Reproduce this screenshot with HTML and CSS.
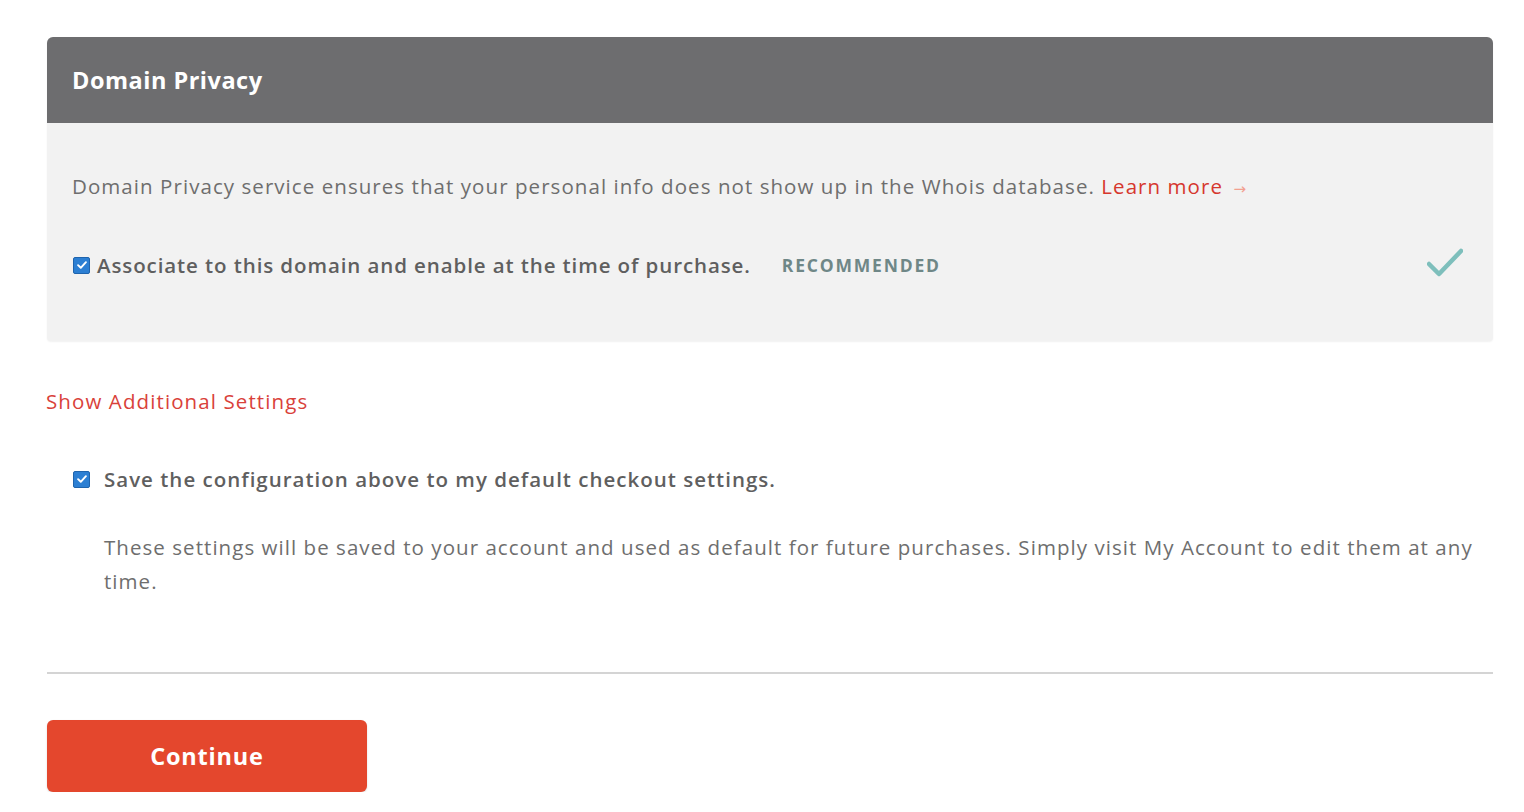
FILE: index.html
```html
<!DOCTYPE html>
<html>
<head>
<meta charset="utf-8">
<link rel="stylesheet" href="styles.css">
</head>
<body>
<div class="page">
  <section class="card">
    <header class="card-head">Domain Privacy</header>
    <div class="card-body">
      <p class="intro">Domain Privacy service ensures that your personal info does not show up in the Whois database. <a class="learn" href="#">Learn more</a> <span class="arrow">&rarr;</span></p>
      <div class="option">
        <label class="opt-label">
          <span class="cbox"><svg viewBox="0 0 16 16" width="16" height="16"><path d="M3.5 8.2 L6.6 11.2 L12.5 4.8" fill="none" stroke="#fff" stroke-width="2.2" stroke-linecap="round" stroke-linejoin="round"/></svg></span>
          <span class="opt-text">Associate to this domain and enable at the time of purchase.</span>
        </label>
        <span class="badge">RECOMMENDED</span>
        <svg class="tick" viewBox="0 0 36 32" width="36" height="32"><path d="M2 17 L12 27 L34 4" fill="none" stroke="#7ebfbc" stroke-width="4.5" stroke-linecap="round" stroke-linejoin="round"/></svg>
      </div>
    </div>
  </section>

  <a class="more" href="#">Show Additional Settings</a>

  <div class="save">
    <label class="save-label">
      <span class="cbox"><svg viewBox="0 0 16 16" width="16" height="16"><path d="M3.5 8.2 L6.6 11.2 L12.5 4.8" fill="none" stroke="#fff" stroke-width="2.2" stroke-linecap="round" stroke-linejoin="round"/></svg></span>
      <span class="save-text">Save the configuration above to my default checkout settings.</span>
    </label>
    <p class="save-desc">These settings will be saved to your account and used as default for future purchases. Simply visit My Account to edit them at any time.</p>
  </div>

  <hr class="divider">

  <button class="continue" type="button">Continue</button>
</div>
</body>
</html>
```

FILE: styles.css
```css
html, body {
  margin: 0;
  padding: 0;
  background: #ffffff;
}
body {
  font-family: "Open Sans", "DejaVu Sans", sans-serif;
  color: #666666;
}
.page {
  width: 1446px;
  margin-left: 47px;
  padding-top: 37px;
}
.card {
  border-radius: 6px 6px 4px 4px;
  overflow: hidden;
  background: #f2f2f2;
  box-shadow: 0 1px 2px rgba(0,0,0,0.06);
}
.card-head {
  height: 86px;
  background: #6d6d6f;
  color: #ffffff;
  font-weight: 700;
  font-size: 23.5px;
  display: flex;
  align-items: center;
  padding-left: 25px;
  letter-spacing: 0.5px;
}
.card-body {
  height: 218px;
  padding: 0 30px 0 25px;
  box-sizing: border-box;
}
.intro {
  margin: 0;
  padding-top: 48px;
  font-size: 20.5px;
  line-height: 30px;
  color: #6e6e6e;
  letter-spacing: 1.06px;
}
.learn {
  color: #d6372e;
  text-decoration: none;
}
.arrow {
  color: #f2a090;
  font-size: 15px;
  letter-spacing: 0;
  margin-left: 4px;
}
.option {
  display: flex;
  align-items: center;
  margin-top: 46px;
  height: 32px;
}
.opt-label {
  display: flex;
  align-items: center;
  gap: 7px;
  margin-left: 1px;
}
.cbox {
  width: 17px;
  height: 17px;
  box-sizing: border-box;
  background: #2c7fd3;
  border: 1px solid #1f64ad;
  border-radius: 2px;
  display: flex;
  align-items: center;
  justify-content: center;
  flex: none;
}
.cbox svg {
  width: 14px;
  height: 14px;
}
.opt-text {
  font-size: 20.5px;
  font-weight: 600;
  color: #5f5f5f;
  letter-spacing: 0.9px;
}
.badge {
  margin-left: 31px;
  font-size: 17.5px;
  font-weight: 700;
  color: #6f8787;
  letter-spacing: 1.8px;
}
.tick {
  margin-left: auto;
  margin-top: -4px;
}
.more {
  display: block;
  margin-top: 45px;
  margin-left: -1px;
  color: #d9413a;
  text-decoration: none;
  font-size: 20.5px;
  line-height: 30px;
  letter-spacing: 1.1px;
}
.save {
  padding-left: 26px;
  margin-top: 48px;
}
.save-label {
  display: flex;
  align-items: center;
  gap: 14px;
  height: 30px;
}
.save-text {
  font-size: 20.5px;
  font-weight: 600;
  color: #5f5f5f;
  letter-spacing: 1px;
}
.save-desc {
  margin: 36px 0 0 31px;
  font-size: 20.5px;
  line-height: 34px;
  color: #6e6e6e;
  letter-spacing: 1.05px;
}
.divider {
  border: none;
  border-top: 2px solid #d4d4d4;
  margin: 74px 0 0 0;
}
.continue {
  display: block;
  margin-top: 46px;
  width: 320px;
  height: 72px;
  border: none;
  border-radius: 6px;
  background: #e4472d;
  color: #ffffff;
  font-family: "Open Sans", "DejaVu Sans", sans-serif;
  font-weight: 700;
  font-size: 23.5px;
  letter-spacing: 0.8px;
  box-shadow: 0 1px 2px rgba(0,0,0,0.15);
}
```
